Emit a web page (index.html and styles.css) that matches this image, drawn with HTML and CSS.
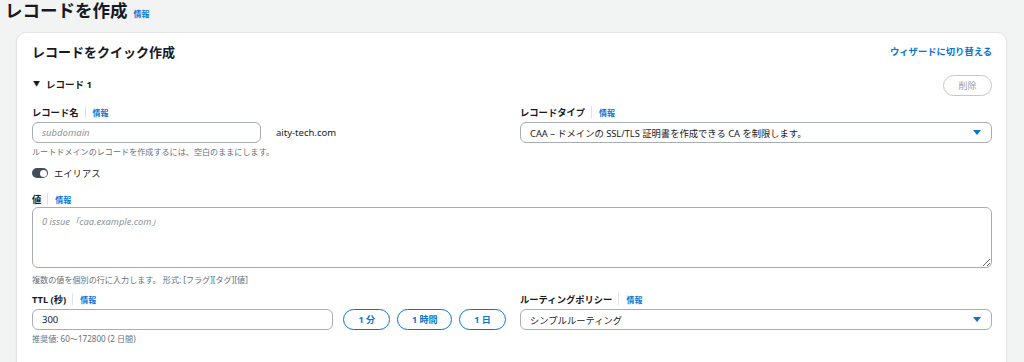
FILE: index.html
```html
<!DOCTYPE html>
<html lang="ja">
<head>
    <meta charset="UTF-8">
    <meta name="viewport" content="width=device-width, initial-scale=1.0">
    <title>レコードを作成</title>
    <link rel="stylesheet" href="styles.css">
</head>
<body>
    <div class="page-header">
        <h1>レコードを作成</h1>
        <a class="info-link" href="#">情報</a>
    </div>

    <div class="card">
        <div class="card-header">
            <h2>レコードをクイック作成</h2>
            <a class="wizard-link" href="#">ウィザードに切り替える</a>
        </div>

        <div class="record-head">
            <span class="record-title"><span class="caret">▼</span>レコード 1</span>
            <button class="pill-button muted">削除</button>
        </div>

        <div class="columns">
            <div class="field">
                <div class="label">レコード名<span class="sep"></span><a class="info-link" href="#">情報</a></div>
                <div class="inline-row">
                    <input type="text" class="text-input name-input" placeholder="subdomain">
                    <span class="domain">aity-tech.com</span>
                </div>
                <div class="hint">ルートドメインのレコードを作成するには、空白のままにします。</div>
            </div>
            <div class="field">
                <div class="label">レコードタイプ<span class="sep"></span><a class="info-link" href="#">情報</a></div>
                <div class="select">
                    <span>CAA – ドメインの SSL/TLS 証明書を作成できる CA を制限します。</span>
                    <span class="arrow"></span>
                </div>
            </div>
        </div>

        <div class="toggle-row">
            <span class="toggle"></span>
            <span>エイリアス</span>
        </div>

        <div class="field value-field">
            <div class="label">値<span class="sep"></span><a class="info-link" href="#">情報</a></div>
            <textarea class="text-area" placeholder="0 issue「caa.example.com」"></textarea>
            <div class="hint">複数の値を個別の行に入力します。 形式: [フラグ][タグ][値]</div>
        </div>

        <div class="columns ttl-row">
            <div class="field">
                <div class="label">TTL (秒)<span class="sep"></span><a class="info-link" href="#">情報</a></div>
                <div class="inline-row">
                    <input type="text" class="text-input ttl-input" value="300">
                    <button class="pill-button">1 分</button>
                    <button class="pill-button">1 時間</button>
                    <button class="pill-button">1 日</button>
                </div>
                <div class="hint">推奨値: 60〜172800 (2 日間)</div>
            </div>
            <div class="field">
                <div class="label">ルーティングポリシー<span class="sep"></span><a class="info-link" href="#">情報</a></div>
                <div class="select">
                    <span>シンプルルーティング</span>
                    <span class="arrow"></span>
                </div>
            </div>
        </div>
    </div>
</body>
</html>
```

FILE: styles.css
```css
* {
    margin: 0;
    padding: 0;
    box-sizing: border-box;
    font-family: "Noto Sans", "Noto Sans CJK JP", sans-serif;
}

body {
    background-color: #f2f3f3;
    color: #16191f;
    overflow: hidden;
}

a {
    text-decoration: none;
}

.page-header {
    display: flex;
    align-items: baseline;
    gap: 6px;
    padding: 0 5px;
    height: 32px;
}

h1 {
    font-size: 17.5px;
    font-weight: 700;
    line-height: 20px;
}

.info-link {
    color: #0972d3;
    font-size: 8px;
    font-weight: 700;
}

.card {
    margin: 0 17px 0 16px;
    background: white;
    border: 1px solid #e3e5e7;
    border-radius: 10px;
    padding: 8px 14px 40px 15px;
    box-shadow: 0 1px 2px rgba(0, 0, 0, 0.06);
}

.card-header {
    display: flex;
    justify-content: space-between;
    align-items: center;
    height: 20px;
}

h2 {
    font-size: 13px;
    font-weight: 700;
}

.wizard-link {
    color: #0972d3;
    font-size: 9.3px;
    font-weight: 700;
}

.record-head {
    display: flex;
    justify-content: space-between;
    align-items: center;
    margin-top: 13px;
    height: 22px;
}

.record-title {
    font-size: 9.5px;
    font-weight: 700;
    margin-left: 1px;
    margin-top: -2px;
}

.caret {
    font-size: 7px;
    margin-right: 6px;
    vertical-align: 2px;
}

.pill-button {
    background: white;
    border: 1.5px solid #0972d3;
    color: #0972d3;
    border-radius: 11px;
    font-size: 9px;
    font-weight: 700;
    height: 21px;
    padding: 0 15px;
    white-space: nowrap;
    cursor: pointer;
}

.pill-button.muted {
    border-color: #c4c7cb;
    color: #9ba0a6;
    font-weight: 400;
    padding: 0;
    width: 49px;
}

.columns {
    display: grid;
    grid-template-columns: 474px 1fr;
    gap: 14px;
    margin-top: 9px;
}

.label {
    display: flex;
    align-items: center;
    font-size: 9.3px;
    font-weight: 700;
    height: 14px;
    margin-bottom: 3px;
}

.label .sep {
    width: 1px;
    height: 12px;
    background: #e0e2e4;
    margin: 0 7px 0 6px;
}

.label .info-link {
    font-size: 8px;
}

.inline-row {
    display: flex;
    align-items: center;
    gap: 7px;
}

.text-input {
    height: 21px;
    border: 1px solid #a7adb3;
    border-radius: 6px;
    padding: 0 9px;
    font-size: 9.5px;
    color: #16191f;
    outline: none;
}

.text-input::placeholder,
.text-area::placeholder {
    color: #8d9399;
    font-style: italic;
}

.name-input {
    width: 229px;
    margin-right: 8px;
}

.domain {
    font-size: 9.5px;
}

.ttl-input {
    width: 302px;
    margin-right: 3px;
}

.hint {
    font-size: 8.1px;
    color: #687078;
    margin-top: 3px;
}

.select {
    display: flex;
    justify-content: space-between;
    align-items: center;
    height: 21px;
    border: 1px solid #a7adb3;
    border-radius: 6px;
    padding: 0 9px 0 9px;
    font-size: 9.3px;
}

.arrow {
    width: 0;
    height: 0;
    border-left: 4px solid transparent;
    border-right: 4px solid transparent;
    border-top: 5px solid #0972d3;
    margin-right: 1px;
}

.toggle-row {
    display: flex;
    align-items: center;
    gap: 6px;
    font-size: 9.3px;
    margin-top: 9px;
    height: 14px;
}

.toggle {
    position: relative;
    width: 16px;
    height: 10px;
    border-radius: 5px;
    background: #414d5c;
}

.toggle::after {
    content: '';
    position: absolute;
    right: 1.5px;
    top: 1.5px;
    width: 7px;
    height: 7px;
    border-radius: 50%;
    background: white;
}

.value-field {
    margin-top: 12px;
}

.value-field .label {
    margin-bottom: 1px;
}

.value-field .hint {
    margin-top: 6px;
}

.text-area {
    display: block;
    width: 100%;
    height: 61px;
    border: 1px solid #a7adb3;
    border-radius: 6px;
    padding: 6px 9px;
    font-size: 9.3px;
    outline: none;
    resize: vertical;
}

.ttl-row {
    margin-top: 7px;
}

.ttl-row .pill-button {
    padding: 0;
}

.ttl-row .pill-button:nth-of-type(1) {
    width: 47px;
}

.ttl-row .pill-button:nth-of-type(2) {
    width: 55px;
}

.ttl-row .pill-button:nth-of-type(3) {
    width: 47px;
}
```
